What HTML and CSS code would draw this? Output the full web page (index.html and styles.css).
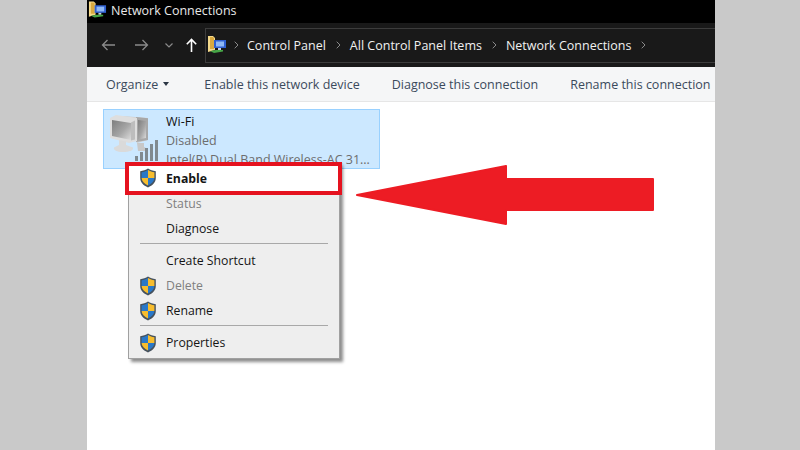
FILE: index.html
```html
<!DOCTYPE html>
<html lang="en">
<head>
<meta charset="utf-8">
<title>Network Connections</title>
<link rel="stylesheet" href="styles.css">
</head>
<body>
<svg class="defs" width="0" height="0" aria-hidden="true">
  <defs>
    <symbol id="shield" viewBox="0 0 18 20">
      <path d="M9 .6C6.800 2.200 4.200 3 1.200 3.200V10c0 4.200 3 7.400 7.800 9.400 4.800-2 7.800-5.200 7.800-9.400V3.200C13.800 3 11.200 2.200 9 .6z" fill="#46525e"/>
      <path d="M9 2.100C7 3.300 5 4 2.600 4.300V10H9z" fill="#2a78c8"/>
      <path d="M9 2.100V10h6.400V4.300C13 4 11 3.300 9 2.100z" fill="#f7bd2e"/>
      <path d="M2.600 10c.2 3.300 2.600 5.800 6.400 7.600V10z" fill="#f7bd2e"/>
      <path d="M9 10v7.600c3.800-1.800 6.200-4.300 6.400-7.600z" fill="#2a78c8"/>
    </symbol>
    <symbol id="netfolder" viewBox="0 0 20 18">
      <path d="M1 0h5l2 2v12l-7 2z" fill="#f4d98a"/>
      <path d="M3 1h3l1 1v11H3z" fill="#d9a93f"/>
      <path d="M7 4h12v8H7z" fill="#2f5fd0"/>
      <path d="M9 5.500h8v5H9z" fill="#8fb8f5"/>
      <path d="M11 12h3v2h-3z" fill="#c9d4e6"/>
      <path d="M3 15l6-1h7v1.500l-9 1.500z" fill="#46a646"/>
    </symbol>
    <linearGradient id="screen" x1="0" y1="0" x2="1" y2="1">
      <stop offset="0" stop-color="#7d7d7d"/>
      <stop offset=".55" stop-color="#a5a5a5"/>
      <stop offset="1" stop-color="#dcdcdc"/>
    </linearGradient>
  </defs>
</svg>
<main class="window">
  <header class="titlebar">
    <svg class="title-icon"><use href="#netfolder"/></svg>
    <span class="title-text">Network Connections</span>
  </header>
  <nav class="addressbar">
    <div class="nav-buttons">
      <svg class="nav-arrow" viewBox="0 0 14 12"><path d="M14 6H1.500M6.500 1 1.500 6l5 5" fill="none" stroke="currentColor" stroke-width="1.300"/></svg>
      <svg class="nav-arrow" viewBox="0 0 14 12"><path d="M0 6h12.500M7.500 1l5 5-5 5" fill="none" stroke="currentColor" stroke-width="1.300"/></svg>
      <svg class="nav-chevron" viewBox="0 0 8 5"><path d="M.5.500 4 4 7.500.5" fill="none" stroke="currentColor" stroke-width="1.200"/></svg>
      <svg class="nav-up" viewBox="0 0 11 14"><path d="M5.500 14V1.500M.8 6.200 5.500 1.500l4.700 4.700" fill="none" stroke="currentColor" stroke-width="1.600"/></svg>
    </div>
    <div class="breadcrumb">
      <svg class="crumb-icon"><use href="#netfolder"/></svg>
      <svg class="sep" viewBox="0 0 5 8"><path d="M.7.700 4 4 .7 7.300" fill="none" stroke="currentColor"/></svg>
      <span class="crumb">Control Panel</span>
      <svg class="sep" viewBox="0 0 5 8"><path d="M.7.700 4 4 .7 7.300" fill="none" stroke="currentColor"/></svg>
      <span class="crumb">All Control Panel Items</span>
      <svg class="sep" viewBox="0 0 5 8"><path d="M.7.700 4 4 .7 7.300" fill="none" stroke="currentColor"/></svg>
      <span class="crumb">Network Connections</span>
      <svg class="sep" viewBox="0 0 5 8"><path d="M.7.700 4 4 .7 7.300" fill="none" stroke="currentColor"/></svg>
    </div>
  </nav>
  <div class="toolbar">
    <span class="tool organize">Organize <i class="caret"></i></span>
    <span class="tool">Enable this network device</span>
    <span class="tool">Diagnose this connection</span>
    <span class="tool">Rename this connection</span>
  </div>
  <section class="content">
    <div class="item">
      <svg class="item-icon" viewBox="0 0 54 50">
        <path d="M16 3l25 2v22l-11 3z" fill="#cfcfcf"/>
        <path d="M29 4l12 1.200V27L29 29z" fill="#a8a8a8"/>
        <path d="M31 7l8 1v17l-8 1.500z" fill="url(#screen)"/>
        <path d="M3 5l6-3 21 3v23l-8 2-19-5z" fill="#dedede"/>
        <path d="M5 7l19 3v17L5 23z" fill="url(#screen)"/>
        <path d="M24 9.500l4-2v19l-4 1z" fill="#bdbdbd"/>
        <path d="M12 27l7 1.500V32l7 2.500c1 3-4 4.500-10 4.500S6 37 7 34.500L12 32z" fill="#dadada"/>
        <path d="M30 30h7v4l4 2v2h-10z" fill="#c8c8c8"/>
        <g fill="#808a90">
          <path d="M28 43h3v5h-3zM33 39h3v9h-3zM38 35h3v13h-3zM43 31h3v17h-3zM48 27h3v21h-3z"/>
        </g>
      </svg>
      <div class="item-text">
        <div class="item-name">Wi-Fi</div>
        <div class="item-sub">Disabled</div>
        <div class="item-sub">Intel(R) Dual Band Wireless-AC 31...</div>
      </div>
    </div>
  </section>

  <div class="menu">
    <div class="menu-row selected"><svg class="shield"><use href="#shield"/></svg><b>Enable</b></div>
    <div class="menu-row disabled">Status</div>
    <div class="menu-row">Diagnose</div>
    <hr class="menu-sep">
    <div class="menu-row">Create Shortcut</div>
    <div class="menu-row disabled"><svg class="shield"><use href="#shield"/></svg>Delete</div>
    <div class="menu-row"><svg class="shield"><use href="#shield"/></svg>Rename</div>
    <hr class="menu-sep">
    <div class="menu-row"><svg class="shield"><use href="#shield"/></svg>Properties</div>
  </div>

  <svg class="big-arrow" viewBox="0 0 300 64">
    <path d="M1 30 150 1V14H297V45H150V59Z" fill="#ed1c24" stroke="#ed1c24" stroke-width="2" stroke-linejoin="round"/>
  </svg>
</main>
</body>
</html>
```
FILE: styles.css
```css
* { box-sizing: border-box; }
html, body { margin: 0; height: 100%; }
body {
  background: #c9c9c9;
  display: flex;
  padding-left: 87px;
  overflow: hidden;
  font-family: "Open Sans", "Noto Sans", sans-serif;
  font-size: 12.500px;
}
.defs { position: absolute; }
.window {
  position: relative;
  width: 628px;
  height: 450px;
  background: #fff;
  display: flex;
  flex-direction: column;
}
.titlebar {
  height: 23px;
  background: #000;
  color: #e8e8e8;
  display: flex;
  align-items: center;
  gap: 4px;
  padding: 0 0 3px 1px;
}
.title-icon { width: 19px; height: 18px; }
.title-text { font-size: 12.500px; }
.addressbar {
  height: 44px;
  background: #191919;
  display: flex;
  align-items: center;
  padding-left: 14px;
}
.nav-buttons {
  width: 104px;
  display: flex;
  align-items: center;
  color: #8a8a8a;
}
.nav-arrow { width: 14px; height: 12px; margin-right: 20px; }
.nav-chevron { width: 8px; height: 5px; margin-left: -4px; margin-right: 13px; }
.nav-up { width: 11px; height: 14px; color: #fff; }
.breadcrumb {
  flex: 1;
  height: 35px;
  border: 1px solid #3c3c3c;
  border-right: 0;
  display: flex;
  align-items: center;
  padding-left: 1px;
  color: #f0f0f0;
}
.crumb-icon { width: 20px; height: 18px; }
.sep {
  width: 5px;
  height: 8px;
  color: #8a8a8a;
  margin: 0 9px 0 10px;
  flex: none;
}
.crumb-icon + .sep { margin: 0 8px 0 7px; }
.crumb { white-space: nowrap; }
.toolbar {
  height: 35px;
  background: #f5f6f7;
  border-bottom: 1px solid #e6e6e6;
  display: flex;
  align-items: center;
  padding-left: 19px;
  color: #3b4a5c;
  gap: 32px;
  white-space: nowrap;
}
.organize { display: flex; align-items: center; gap: 5px; margin-right: 3px; }
.caret {
  width: 0; height: 0;
  border: 3.500px solid transparent;
  border-top: 4px solid #2b3644;
  border-bottom: 0;
}
.content { flex: 1; padding: 7px 0 0 16px; }
.item {
  width: 277px;
  height: 60px;
  background: #cce8ff;
  border: 1px solid #99d1ff;
  display: flex;
  padding: 2px 0 0 3px;
  overflow: hidden;
}
.item-icon { width: 54px; height: 50px; flex: none; margin-top: 1px; }
.item-text { margin-left: 5px; line-height: 19px; white-space: nowrap; }
.item-name { color: #111; }
.item-sub { color: #6d6d6d; }
.menu {
  position: absolute;
  left: 41px;
  top: 162px;
  width: 212px;
  height: 197px;
  background: #eeeeee;
  border: 1px solid #a0a0a0;
  box-shadow: 3px 3px 3px rgba(0, 0, 0, .45);
  color: #151515;
  font-size: 12.250px;
}
.menu-row {
  position: relative;
  height: 25px;
  line-height: 25px;
  padding-left: 37px;
}
.menu-row.disabled { color: #7f7f7f; }
.shield { position: absolute; left: 10px; top: 3px; width: 18px; height: 20px; }
.menu-row.selected {
  margin: -1px -3px -4px -4px;
  height: 33px;
  line-height: 25px;
  padding-left: 37px;
  background: #fff;
  border: 4px solid #e5121f;
}
.menu-row.selected .shield { left: 10px; top: 2px; }
.menu-sep {
  border: 0;
  border-top: 1px solid #a8a8a8;
  margin: 2px 11px 4px 11px;
  height: 1px;
}
.big-arrow {
  position: absolute;
  left: 269px;
  top: 165px;
  width: 300px;
  height: 64px;
}
```
